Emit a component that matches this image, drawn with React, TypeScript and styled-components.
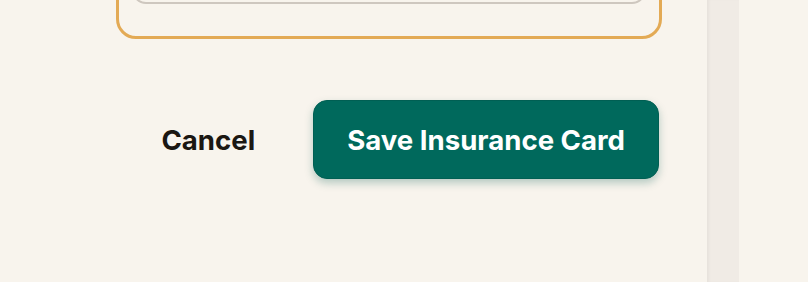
import styled, { createGlobalStyle } from "styled-components";

const GlobalStyle = createGlobalStyle`
  html, body {
    margin: 0;
    padding: 0;
    background: #f8f4ed;
    font-family: Inter, "Liberation Sans", sans-serif;
    overflow: hidden;
  }
`;

const StyledPage = styled.div`
  display: flex;
  width: 808px;
  height: 282px;
  overflow: hidden;
  background: #f8f4ed;
`;

const StyledMain = styled.div`
  width: 707px;
  flex-shrink: 0;
  padding: 0 45px 0 116px;
  box-sizing: border-box;
`;

const StyledCard = styled.div`
  margin-top: -62px;
  border: 3px solid #e3aa55;
  border-radius: 20px;
  padding: 13px 13px 32px;

  .field {
    height: 50px;
    border: 2px solid #cec7bf;
    border-radius: 14px;
    box-sizing: border-box;
    background: #f8f4ed;
  }
`;

const StyledFooter = styled.div`
  display: flex;
  align-items: center;
  justify-content: flex-end;
  gap: 34px;
  margin-top: 61px;
  padding-right: 3px;
`;

const StyledButton = styled.button<{ $primary?: boolean }>`
  font-family: Inter, "Liberation Sans", sans-serif;
  font-size: 27.6px;
  font-weight: 700;
  cursor: pointer;
  height: 79px;
  border-radius: 14px;
  padding: ${(p) => (p.$primary ? "0 33px" : "0 24px")};
  color: ${(p) => (p.$primary ? "#ffffff" : "#1b1712")};
  background: ${(p) => (p.$primary ? "#00695c" : "transparent")};
  border: ${(p) => (p.$primary ? "1px solid #005f53" : "none")};
  box-shadow: ${(p) =>
    p.$primary ? "0 4px 8px rgba(0, 90, 78, 0.28)" : "none"};
`;

const StyledStrip = styled.div`
  width: 32px;
  flex-shrink: 0;
  background: #f0ebe5;
  box-shadow: inset 3px 0 3px -1px rgba(0, 0, 0, 0.04);
`;

const App = () => {
  return (
    <>
      <GlobalStyle />
      <StyledPage>
        <StyledMain>
          <StyledCard>
            <div className="field" />
          </StyledCard>
          <StyledFooter>
            <StyledButton>Cancel</StyledButton>
            <StyledButton $primary>Save Insurance Card</StyledButton>
          </StyledFooter>
        </StyledMain>
        <StyledStrip />
      </StyledPage>
    </>
  );
};

export default App;
